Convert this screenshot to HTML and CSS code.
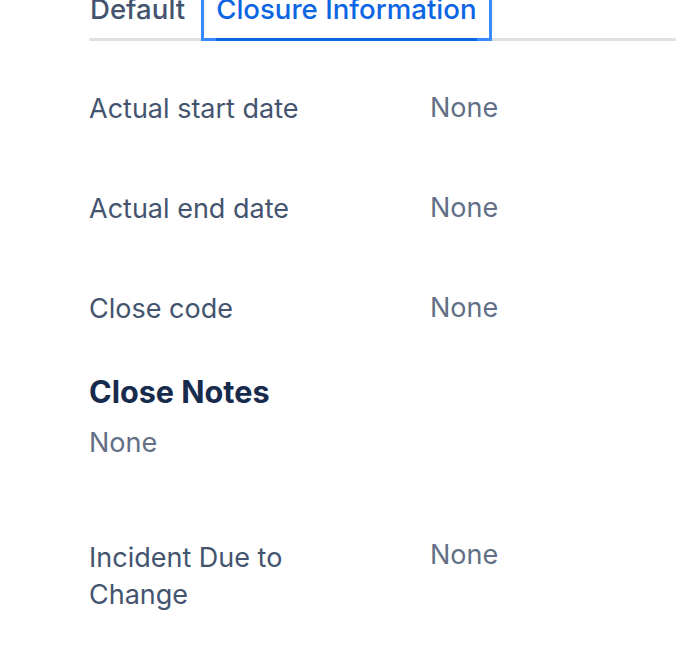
FILE: index.html
```html
<!DOCTYPE html>
<html>
<head>
<meta charset="utf-8">
<link rel="stylesheet" href="styles.css">
</head>
<body>
<div class="page">
  <div class="tabs">
    <div class="tab">Default</div>
    <div class="tab active">Closure Information</div>
  </div>
  <div class="fields">
    <div class="row"><div class="label">Actual start date</div><div class="value">None</div></div>
    <div class="row"><div class="label">Actual end date</div><div class="value">None</div></div>
    <div class="row"><div class="label">Close code</div><div class="value">None</div></div>
  </div>
  <div class="notes">
    <h2 class="notes-title">Close Notes</h2>
    <div class="notes-value">None</div>
  </div>
  <div class="row last"><div class="label">Incident Due to Change</div><div class="value raised">None</div></div>
</div>
</body>
</html>
```

FILE: styles.css
```css
html, body {
  margin: 0;
  padding: 0;
  background: #ffffff;
  overflow: hidden;
}
body {
  font-family: Inter, "Noto Sans", sans-serif;
  font-size: 27px;
  line-height: 37px;
  color: #44546F;
}
.page {
  padding-left: 89px;
  margin-top: -9px;
}
.tabs {
  display: flex;
  position: relative;
  gap: 16px;
}
.tabs::before {
  content: "";
  position: absolute;
  left: 0;
  right: 0;
  bottom: 0;
  height: 3px;
  border-radius: 2px;
  background: #DCDFE4;
}
.tab {
  position: relative;
  padding: 0 0 13px 1px;
  color: #44546F;
  font-size: 27.6px;
  font-weight: 500;
}
.tab.active {
  color: #0C66E4;
  padding: 0 15px 13px 15px;
  outline: 3px solid #388BFF;
  outline-offset: -3px;
}
.tab.active::after {
  content: "";
  position: absolute;
  left: 15px;
  right: 15px;
  bottom: 0;
  height: 3px;
  background: #0C66E4;
}
.fields {
  padding-top: 17px;
}
.row {
  display: flex;
  padding: 32px 0 31px;
}
.label {
  width: 341px;
  padding-right: 80px;
  box-sizing: border-box;
}
.value {
  color: #626F86;
  margin-top: -1px;
}
.value.raised {
  margin-top: -3px;
}
.notes {
  padding-top: 15px;
}
.notes-title {
  margin: 0;
  font-size: 30.6px;
  line-height: 37px;
  font-weight: 700;
  color: #172B4D;
}
.notes-value {
  margin-top: 14px;
  color: #626F86;
}
.row.last {
  padding-top: 78px;
}
```
